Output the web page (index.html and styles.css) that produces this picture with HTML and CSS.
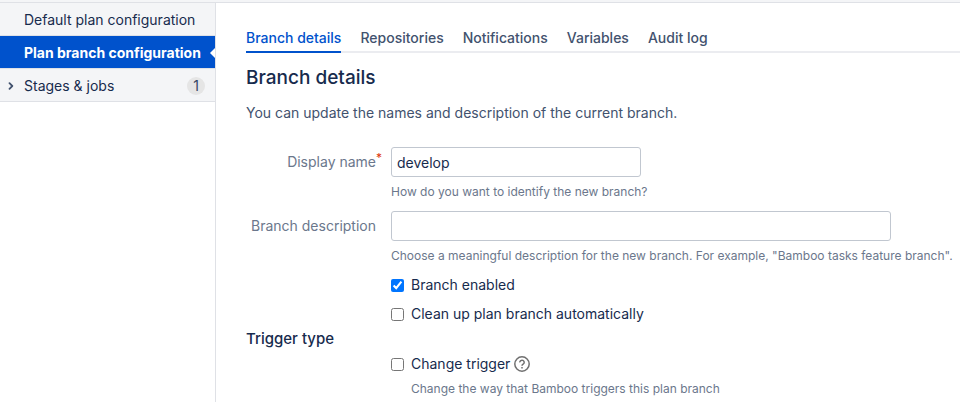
FILE: index.html
```html
<!DOCTYPE html>
<html lang="en">
<head>
    <meta charset="UTF-8">
    <meta name="viewport" content="width=device-width, initial-scale=1.0">
    <title>Plan branch configuration</title>
    <link rel="stylesheet" href="styles.css">
</head>
<body>

<div class="top-bar"></div>

<div class="page">
    <nav class="sidebar">
        <a class="side-item" href="#default">Default plan configuration</a>
        <a class="side-item active" href="#branch">Plan branch configuration</a>
        <a class="side-item" href="#stages">
            <svg class="chevron" width="6" height="8" viewBox="0 0 6 8"><path d="M1.5 1.2l2.8 2.8-2.8 2.8" fill="none" stroke="#42526e" stroke-width="1.8" stroke-linecap="round" stroke-linejoin="round"/></svg>
            <span>Stages &amp; jobs</span>
            <span class="count">1</span>
        </a>
    </nav>

    <main class="content">
        <nav class="tabs">
            <a class="tab selected" href="#details">Branch details</a>
            <a class="tab" href="#repositories">Repositories</a>
            <a class="tab" href="#notifications">Notifications</a>
            <a class="tab" href="#variables">Variables</a>
            <a class="tab" href="#audit">Audit log</a>
        </nav>

        <h2>Branch details</h2>
        <p class="intro">You can update the names and description of the current branch.</p>

        <form>
            <div class="field-group">
                <label class="field-label" for="display-name">Display name<span class="required">*</span></label>
                <div class="field">
                    <input class="text medium" type="text" id="display-name" value="develop">
                    <div class="description">How do you want to identify the new branch?</div>
                </div>
            </div>

            <div class="field-group">
                <label class="field-label" for="description">Branch description</label>
                <div class="field">
                    <input class="text long" type="text" id="description">
                    <div class="description">Choose a meaningful description for the new branch. For example, "Bamboo tasks feature branch".</div>
                </div>
            </div>

            <!-- Branch options -->
            <div class="checks">
                <div class="check">
                    <input type="checkbox" id="enabled" checked>
                    <label for="enabled">Branch enabled</label>
                </div>
                <div class="check">
                    <input type="checkbox" id="cleanup">
                    <label for="cleanup">Clean up plan branch automatically</label>
                </div>
            </div>

            <h3>Trigger type</h3>
            <div class="checks">
                <div class="check">
                    <input type="checkbox" id="trigger">
                    <label for="trigger">Change trigger</label>
                    <svg class="help" width="16" height="16" viewBox="0 0 16 16" fill="none" stroke="#707070" stroke-width="1.5"><circle cx="8" cy="8" r="7.2"/><path d="M5.8 6.4a2.2 2.1 0 1 1 3.5 1.6C8.5 8.6 8 8.9 8 9.8"/><path d="M8 11v1.5"/></svg>
                </div>
                <div class="description indented">Change the way that Bamboo triggers this plan branch</div>
            </div>
        </form>
    </main>
</div>

</body>
</html>
```

FILE: styles.css
```css
* {
    box-sizing: border-box;
}
body {
    margin: 0;
    font-family: Inter, Roboto, sans-serif;
    font-size: 14px;
    line-height: 20px;
    color: #172b4d;
    background-color: #ffffff;
}
a {
    color: inherit;
    text-decoration: none;
}
.top-bar {
    height: 3px;
    background-color: #f4f5f7;
    border-bottom: 1px solid #dfe1e6;
}
.page {
    display: flex;
    min-height: calc(100vh - 3px);
}
.sidebar {
    flex: 0 0 216px;
    border-right: 1px solid #dfe1e6;
}
.side-item {
    display: flex;
    align-items: center;
    position: relative;
    height: 33px;
    padding: 2px 10px 0 24px;
    background-color: #f4f5f7;
    border-bottom: 1px solid #dfe1e6;
    white-space: nowrap;
}
.side-item.active {
    background-color: #0052cc;
    color: #ffffff;
    font-weight: 700;
}
/* White arrow on the right edge of the active item */
.side-item.active::after {
    content: "";
    position: absolute;
    right: 0;
    top: 12px;
    border: 5px solid transparent;
    border-right-color: #ffffff;
    border-left-width: 0;
}
.chevron {
    position: absolute;
    left: 8px;
}
.count {
    margin-left: auto;
    min-width: 18px;
    line-height: 18px;
    border-radius: 9px;
    background-color: #e5e5e5;
    color: #344563;
    text-align: center;
}
.content {
    flex: 1;
    min-width: 0;
    padding: 25px 0 0 30px;
}
.tabs {
    display: flex;
    gap: 19px;
    border-bottom: 2px solid #ebecf0;
}
.tab {
    margin-bottom: -2px;
    padding-bottom: 3px;
    border-bottom: 2px solid transparent;
    color: #42526e;
    font-weight: 500;
}
.tab.selected {
    color: #0052cc;
    border-bottom-color: #0052cc;
}
h2 {
    margin: 13px 0 0;
    font-size: 19px;
    font-weight: 500;
    line-height: 24px;
}
.intro {
    margin: 13px 0 24px;
    color: #42526e;
}
.field-group {
    display: flex;
    margin-bottom: 11px;
}
.field-label {
    flex: 0 0 145px;
    padding: 5px 15px 0 0;
    color: #6b778c;
    text-align: right;
    position: relative;
}
.required {
    position: absolute;
    top: 1px;
    right: 9px;
    color: #de350b;
    font-size: 12px;
}
.field {
    flex: 1;
    min-width: 0;
}
.text {
    display: block;
    width: 100%;
    height: 30px;
    padding: 0 5px;
    border: 1px solid #c1c7d0;
    border-radius: 3px;
    background-color: #ffffff;
    color: #172b4d;
    font: inherit;
}
.medium {
    max-width: 250px;
}
.long {
    max-width: 500px;
}
.description {
    margin-top: 7px;
    color: #6b778c;
    font-size: 12px;
    line-height: 16px;
    white-space: nowrap;
}
.checks {
    padding-left: 145px;
}
.check {
    display: flex;
    align-items: center;
    margin-bottom: 9px;
}
.check input {
    width: 13px;
    height: 13px;
    margin: 0 7px 0 0;
    accent-color: #0075ff;
}
.help {
    margin-left: 4px;
}
h3 {
    margin: -4px 0 5px;
    font-size: 15px;
    font-weight: 500;
    line-height: 20px;
}
.indented {
    margin-top: -2px;
    padding-left: 20px;
}
```
